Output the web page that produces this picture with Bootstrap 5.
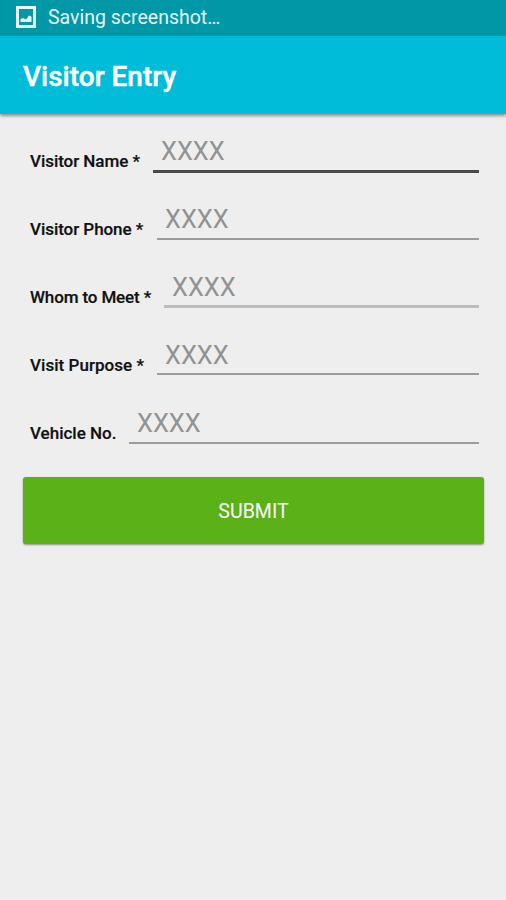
<!DOCTYPE html>
<html lang="en">
<head>
<meta charset="utf-8">
<meta name="viewport" content="width=device-width, initial-scale=1">
<title>Visitor Entry</title>
<link href="https://cdn.jsdelivr.net/npm/bootstrap@5.3.0/dist/css/bootstrap.min.css" rel="stylesheet">
<style>
body { font-family: Roboto, "Liberation Sans", sans-serif; background: #eee; min-height: 900px; overflow: hidden; }
.status-strip { height: 36px; background: #0097a7; color: #e4f6f8; font-size: 19.5px; line-height: 35px; padding-left: 16px; gap: 12px; }
.status-strip svg { margin-top: 6px; }
.app-bar { height: 78px; background: #00bcd9; padding: 0 23px 0; box-shadow: 0 2px 3px rgba(0,0,0,.4); }
.app-title { font-size: 28px; font-weight: 500; line-height: 32px; -webkit-text-stroke: .4px #fff; margin-top: 3px; }
.entry-form { padding: 17px 22px 0 23px; }
.entry-fields { padding: 0 5px 0 7px; }
.entry-row { height: 68px; }
.entry-label { flex: none; font-size: 17px; font-weight: 500; line-height: 20px; color: #111; margin: 20px 13px 0 0; white-space: nowrap; -webkit-text-stroke: .2px #111; }
.label-name { width: 110px; letter-spacing: -.05px; }
.label-phone { width: 114px; letter-spacing: -.05px; }
.label-meet { width: 121px; letter-spacing: -.13px; }
.label-purpose { width: 114px; letter-spacing: .04px; }
.label-vehicle { width: 86px; }
.entry-input, .entry-input:focus { height: 41px; min-width: 0; padding: 0 8px; font-size: 25.4px; border: 0; border-bottom: 2px solid #9c9c9c; border-radius: 0; background: transparent; box-shadow: none; }
.entry-input::placeholder { color: #929292; opacity: 1; }
.entry-input.active-line { height: 42px; border-bottom: 3px solid #4b494b; }
.entry-input.soft-line { border-bottom: 3px solid #bcbcbc; padding-top: 1px; }
.entry-input.short-line { height: 40px; padding-top: 1px; }
.submit-btn, .submit-btn:hover { height: 67px; margin-top: 6px; background: #5ab118; color: #fff; border: 0; border-radius: 3px; font-size: 19.6px; padding-top: 8px; box-shadow: 0 1px 2px rgba(0,0,0,.4); }
</style>
<script src="https://cdn.jsdelivr.net/npm/bootstrap@5.3.0/dist/js/bootstrap.bundle.min.js"></script>
</head>
<body>
<div class="status-strip d-flex">
  <svg width="20" height="22" viewBox="0 0 20 22" fill="none" aria-hidden="true">
    <path d="M1.5 1.5h17v19h-17z" stroke="#e9f7f8" stroke-width="3"/>
    <path d="M4.5 16v-3l2.5-1 3 1.5 3-4 1.500.5 1 1v5z" fill="#e9f7f8"/>
  </svg>
  <span>Saving screenshot…</span>
</div>
<header class="app-bar d-flex align-items-center position-relative">
  <h1 class="app-title mb-0 text-white">Visitor Entry</h1>
</header>
<form class="entry-form">
  <div class="entry-fields">
    <div class="entry-row d-flex align-items-start">
      <label class="entry-label label-name" for="visitorName">Visitor Name *</label>
      <input class="entry-input form-control flex-fill active-line" id="visitorName" placeholder="XXXX">
    </div>
    <div class="entry-row d-flex align-items-start">
      <label class="entry-label label-phone" for="visitorPhone">Visitor Phone *</label>
      <input class="entry-input form-control flex-fill" id="visitorPhone" placeholder="XXXX">
    </div>
    <div class="entry-row d-flex align-items-start">
      <label class="entry-label label-meet" for="whomToMeet">Whom to Meet *</label>
      <input class="entry-input form-control flex-fill soft-line" id="whomToMeet" placeholder="XXXX">
    </div>
    <div class="entry-row d-flex align-items-start">
      <label class="entry-label label-purpose" for="visitPurpose">Visit Purpose *</label>
      <input class="entry-input form-control flex-fill short-line" id="visitPurpose" placeholder="XXXX">
    </div>
    <div class="entry-row d-flex align-items-start">
      <label class="entry-label label-vehicle" for="vehicleNo">Vehicle No.</label>
      <input class="entry-input form-control flex-fill" id="vehicleNo" placeholder="XXXX">
    </div>
  </div>
  <button type="button" class="submit-btn btn w-100 d-block">SUBMIT</button>
</form>
</body>
</html>
